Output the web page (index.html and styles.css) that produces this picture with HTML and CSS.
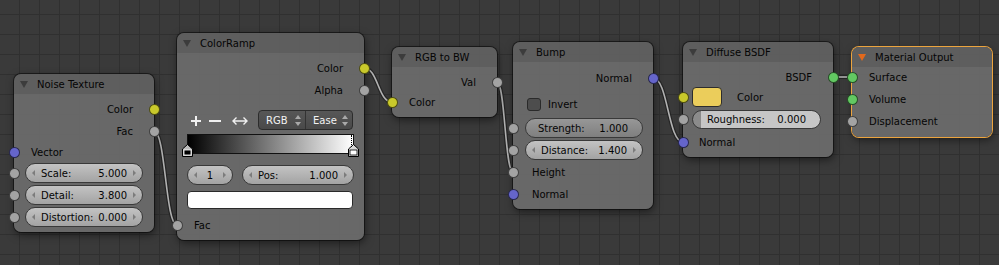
FILE: index.html
```html
<!DOCTYPE html>
<html>
<head>
	<meta charset="utf-8">
	<title>Node Editor</title>
	<link rel="stylesheet" href="styles.css">
</head>
<body>
<div class="editor">
	<svg class="links" width="999" height="265">
		<g class="edge">
			<path d="M154 131 C165.5 131 165.5 225 177 225"/>
			<path d="M364 68 C378 68 378 102 392 102"/>
			<path d="M497 82 C505 82 505 172 513 172"/>
			<path d="M653 78 C668 78 668 142 683 142"/>
			<path d="M833 77 L852 77"/>
		</g>
		<g class="wire">
			<path d="M154 131 C165.5 131 165.5 225 177 225"/>
			<path d="M364 68 C378 68 378 102 392 102"/>
			<path d="M497 82 C505 82 505 172 513 172"/>
			<path d="M653 78 C668 78 668 142 683 142"/>
			<path d="M833 77 L852 77"/>
		</g>
	</svg>

	<!-- Noise Texture -->
	<div class="node n-noise">
		<div class="head"><span class="tri"></span><span class="title">Noise Texture</span></div>
		<div class="body">
			<div class="row out">Color<span class="sock r yellow"></span></div>
			<div class="row out">Fac<span class="sock r grey"></span></div>
			<div class="row in h20"><span class="sock l blue"></span>Vector</div>
			<div class="row prop"><span class="sock l grey"></span>
				<div class="field num"><span class="arr lt"></span>Scale:<span class="val">5.000</span><span class="arr rt"></span></div>
			</div>
			<div class="row prop"><span class="sock l grey"></span>
				<div class="field num"><span class="arr lt"></span>Detail:<span class="val">3.800</span><span class="arr rt"></span></div>
			</div>
			<div class="row prop"><span class="sock l grey"></span>
				<div class="field num"><span class="arr lt"></span>Distortion:<span class="val">0.000</span><span class="arr rt"></span></div>
			</div>
		</div>
	</div>

	<!-- ColorRamp -->
	<div class="node n-ramp">
		<div class="head"><span class="tri"></span><span class="title">ColorRamp</span></div>
		<div class="body">
			<div class="row out">Color<span class="sock r yellow"></span></div>
			<div class="row out">Alpha<span class="sock r grey"></span></div>
			<div class="tools">
				<svg class="icons" width="62" height="20">
					<path d="M4 11 H14 M9 6 V16 M22 11 H34" stroke="#f0f0f0" stroke-width="2" fill="none"/>
					<path d="M46 11 H60 M49.5 7.5 L46 11 L49.5 14.5 M56.5 7.5 L60 11 L56.5 14.5" stroke="#f0f0f0" stroke-width="1.4" fill="none"/>
				</svg>
				<div class="drop">
					<div class="opt">RGB<svg class="ud" width="6" height="11"><path d="M3 0 L6 4 H0 Z M3 11 L6 7 H0 Z" fill="#a9a9a9"/></svg></div>
					<div class="opt">Ease<svg class="ud" width="6" height="11"><path d="M3 0 L6 4 H0 Z M3 11 L6 7 H0 Z" fill="#a9a9a9"/></svg></div>
				</div>
			</div>
			<div class="ramp">
				<svg class="stop first" width="11" height="13"><path d="M0.5 12.5 V5 L5.5 0.5 L10.5 5 V12.5 Z" fill="#bdbdbd" stroke="#000"/><rect x="2" y="6" width="7" height="5" fill="#000" stroke="#fff" stroke-width="0.8"/></svg>
				<svg class="stop last" width="11" height="13"><path d="M0.5 12.5 V5 L5.5 0.5 L10.5 5 V12.5 Z" fill="#d8d8d8" stroke="#000"/><rect x="2" y="6" width="7" height="5" fill="#fff" stroke="#000" stroke-width="0.8"/></svg>
			</div>
			<div class="rampfields">
				<div class="field num idx"><span class="arr lt"></span><span>1</span><span class="arr rt"></span></div>
				<div class="field num pos"><span class="arr lt"></span>Pos:<span class="val">1.000</span><span class="arr rt"></span></div>
			</div>
			<div class="swatch"></div>
			<div class="row in fac"><span class="sock l grey"></span>Fac</div>
		</div>
	</div>

	<!-- RGB to BW -->
	<div class="node n-bw">
		<div class="head"><span class="tri"></span><span class="title">RGB to BW</span></div>
		<div class="body">
			<div class="row out h20">Val<span class="sock r grey"></span></div>
			<div class="row in h20"><span class="sock l yellow"></span>Color</div>
		</div>
	</div>

	<!-- Bump -->
	<div class="node n-bump">
		<div class="head"><span class="tri"></span><span class="title">Bump</span></div>
		<div class="body">
			<div class="row out">Normal<span class="sock r blue"></span></div>
			<div class="row invert"><span class="check"></span>Invert</div>
			<div class="row prop first"><span class="sock l grey"></span>
				<div class="field dark">Strength:<span class="val">1.000</span></div>
			</div>
			<div class="row prop"><span class="sock l grey"></span>
				<div class="field num"><span class="arr lt"></span>Distance:<span class="val">1.400</span><span class="arr rt"></span></div>
			</div>
			<div class="row in"><span class="sock l grey"></span>Height</div>
			<div class="row in"><span class="sock l blue"></span>Normal</div>
		</div>
	</div>

	<!-- Diffuse BSDF -->
	<div class="node n-diffuse">
		<div class="head"><span class="tri"></span><span class="title">Diffuse BSDF</span></div>
		<div class="body">
			<div class="row out h20">BSDF<span class="sock r green"></span></div>
			<div class="row color h20"><span class="sock l yellow"></span><span class="chip"></span>Color</div>
			<div class="row prop"><span class="sock l grey"></span>
				<div class="field slider">Roughness:<span class="val">0.000</span></div>
			</div>
			<div class="row in last"><span class="sock l blue"></span>Normal</div>
		</div>
	</div>

	<!-- Material Output -->
	<div class="node n-output active">
		<div class="head"><span class="tri"></span><span class="title">Material Output</span></div>
		<div class="body">
			<div class="row in h21"><span class="sock l green"></span>Surface</div>
			<div class="row in"><span class="sock l green"></span>Volume</div>
			<div class="row in"><span class="sock l grey"></span>Displacement</div>
		</div>
	</div>
</div>
</body>
</html>
```

FILE: styles.css
```css
*{
	margin: 0;
	padding: 0;
	box-sizing: border-box;
}

body{
	background: #3a3a3a;
	font: 10px "DejaVu Sans", sans-serif;
	color: #050505;
}

.editor{
	position: relative;
	width: 999px;
	height: 265px;
	overflow: hidden;
	background-color: #3a3a3a;
	background-image:
		linear-gradient(to right, #303030 1px, transparent 1px),
		linear-gradient(to bottom, #303030 1px, transparent 1px);
	background-size: 20px 20px;
	background-position: 19px 14px;
}

/* links between sockets */
.links{
	position: absolute;
	left: 0;
	top: 0;
}
.links path{
	fill: none;
}
.links .edge path{
	stroke: #252525;
	stroke-width: 4;
}
.links .wire path{
	stroke: #b2b2b2;
	stroke-width: 1.6;
}

/* nodes */
.node{
	position: absolute;
	border-radius: 7px;
	background: rgba(108,108,108,0.93);
	box-shadow: 0 0 0 1px rgba(0,0,0,0.5), 1px 3px 8px rgba(0,0,0,0.5);
}
.node.active{
	box-shadow: 0 0 0 1px #eca43e, 1px 3px 8px rgba(0,0,0,0.5);
}
.n-noise{ left: 14px; top: 74px; width: 140px; }
.n-ramp{ left: 177px; top: 33px; width: 187px; }
.n-bw{ left: 392px; top: 47px; width: 105px; }
.n-bump{ left: 513px; top: 42px; width: 140px; }
.n-diffuse{ left: 683px; top: 42px; width: 150px; }
.n-output{ left: 852px; top: 47px; width: 140px; }

.head{
	height: 20px;
	display: flex;
	align-items: center;
	padding-left: 6px;
	background: rgba(0,0,0,0.09);
	border-radius: 7px 7px 0 0;
}
.tri{
	width: 0;
	height: 0;
	border-left: 4px solid transparent;
	border-right: 4px solid transparent;
	border-top: 7px solid #3c3c3c;
}
.active .tri{
	border-top-color: #e2691c;
}
.title{
	margin-left: 9px;
}

.body{
	padding: 4px 0;
}
.n-bw .body,
.n-bump .body{
	padding: 5px 0;
}
.n-bump .body{ padding-bottom: 4px; }
.n-diffuse .body{ padding: 5px 0 4px; }
.n-output .body{ padding: 0 0 5px; }

.row{
	position: relative;
	height: 22px;
	display: flex;
	align-items: center;
}
.row.h20{ height: 20px; }
.row.h21{ height: 21px; }
.row.out{
	justify-content: flex-end;
	padding-right: 21px;
}
.row.in{
	padding-left: 17px;
}
.n-bump .row.in{ padding-left: 19px; }
.n-diffuse .row.in{ padding-left: 16px; }

/* sockets */
.sock{
	position: absolute;
	top: 50%;
	width: 11px;
	height: 11px;
	margin-top: -5.5px;
	border-radius: 50%;
	border: 1px solid rgba(0,0,0,0.6);
}
.sock.l{ left: -5.5px; }
.sock.r{ right: -5.5px; }
.yellow{ background: #c9c92b; }
.grey{ background: #a3a3a3; }
.blue{ background: #6565cb; }
.green{ background: #62c862; }

/* value fields */
.prop{
	padding: 0 11px;
}
.field{
	flex: 1;
	height: 20px;
	display: flex;
	align-items: center;
	border-radius: 10px;
	border: 1px solid #393939;
	background: linear-gradient(#c3c3c3, #a3a3a3);
	padding: 0 13px;
	white-space: nowrap;
}
.field .val{
	margin-left: auto;
}
.field.num{
	padding: 0 6px;
}
.arr{
	width: 0;
	height: 0;
	border-top: 3px solid transparent;
	border-bottom: 3px solid transparent;
}
.arr.lt{
	border-right: 3px solid #7c7c7c;
	margin-right: 6px;
}
.arr.rt{
	border-left: 3px solid #7c7c7c;
	margin-left: 6px;
}
.field.dark{
	background: linear-gradient(#979797, #7f7f7f);
	padding: 0 14px 0 12px;
}
.field.slider{
	height: 19px;
	background: linear-gradient(to right, #8b8b8b 0, #8b8b8b 8px, #c6c6c6 8px);
	padding: 0 14px;
}

/* color ramp */
.tools{
	display: flex;
	align-items: center;
	height: 20px;
	margin: 9px 11px 0 10px;
}
.drop{
	margin-left: auto;
	width: 95px;
	height: 20px;
	display: flex;
	border: 1px solid #2c2c2c;
	border-radius: 4px;
	background: linear-gradient(#575757, #494949);
	color: #f2f2f2;
}
.opt{
	flex: 1;
	display: flex;
	align-items: center;
	padding: 0 4px 0 7px;
}
.opt + .opt{
	border-left: 1px solid #333;
}
.ud{
	margin-left: auto;
}
.ramp{
	position: relative;
	height: 20px;
	margin: 4px 10px 0;
	border: 1px solid #111;
	background: linear-gradient(to right, #000, #fff);
}
.ramp::after{
	content: "";
	position: absolute;
	right: 1px;
	top: 0;
	height: 12px;
	border-right: 1px dotted #000;
}
.stop{
	position: absolute;
	bottom: -4px;
}
.stop.first{ left: -6px; }
.stop.last{ right: -6px; }
.rampfields{
	display: flex;
	gap: 9px;
	height: 20px;
	margin: 11px 10px 0;
}
.field.idx{
	flex: 0 0 46px;
	justify-content: space-between;
}
.swatch{
	height: 18px;
	margin: 6px 11px 0 10px;
	background: #fff;
	border: 1px solid #2a2a2a;
	border-radius: 4px;
}
.row.fac{
	margin-top: 5px;
}

/* bump */
.row.invert{
	margin-top: 4px;
	padding-left: 14px;
}
.check{
	width: 14px;
	height: 13px;
	margin-right: 7px;
	background: #4d4d4d;
	border: 1px solid #2a2a2a;
	border-radius: 3px;
}
.n-bump .prop{
	padding: 0 10px 0 12px;
}
.n-bump .prop.first{
	margin-top: 2px;
}

/* diffuse */
.row.color{
	padding-left: 9px;
}
.chip{
	width: 30px;
	height: 20px;
	margin-right: 15px;
	background: #ebcd5b;
	border: 1px solid #2d2d2d;
	border-radius: 4px;
}
.n-diffuse .prop{
	margin-top: 1px;
	padding: 0 12px 0 9px;
}
.n-diffuse .row.last{
	margin-top: 1px;
}
```
